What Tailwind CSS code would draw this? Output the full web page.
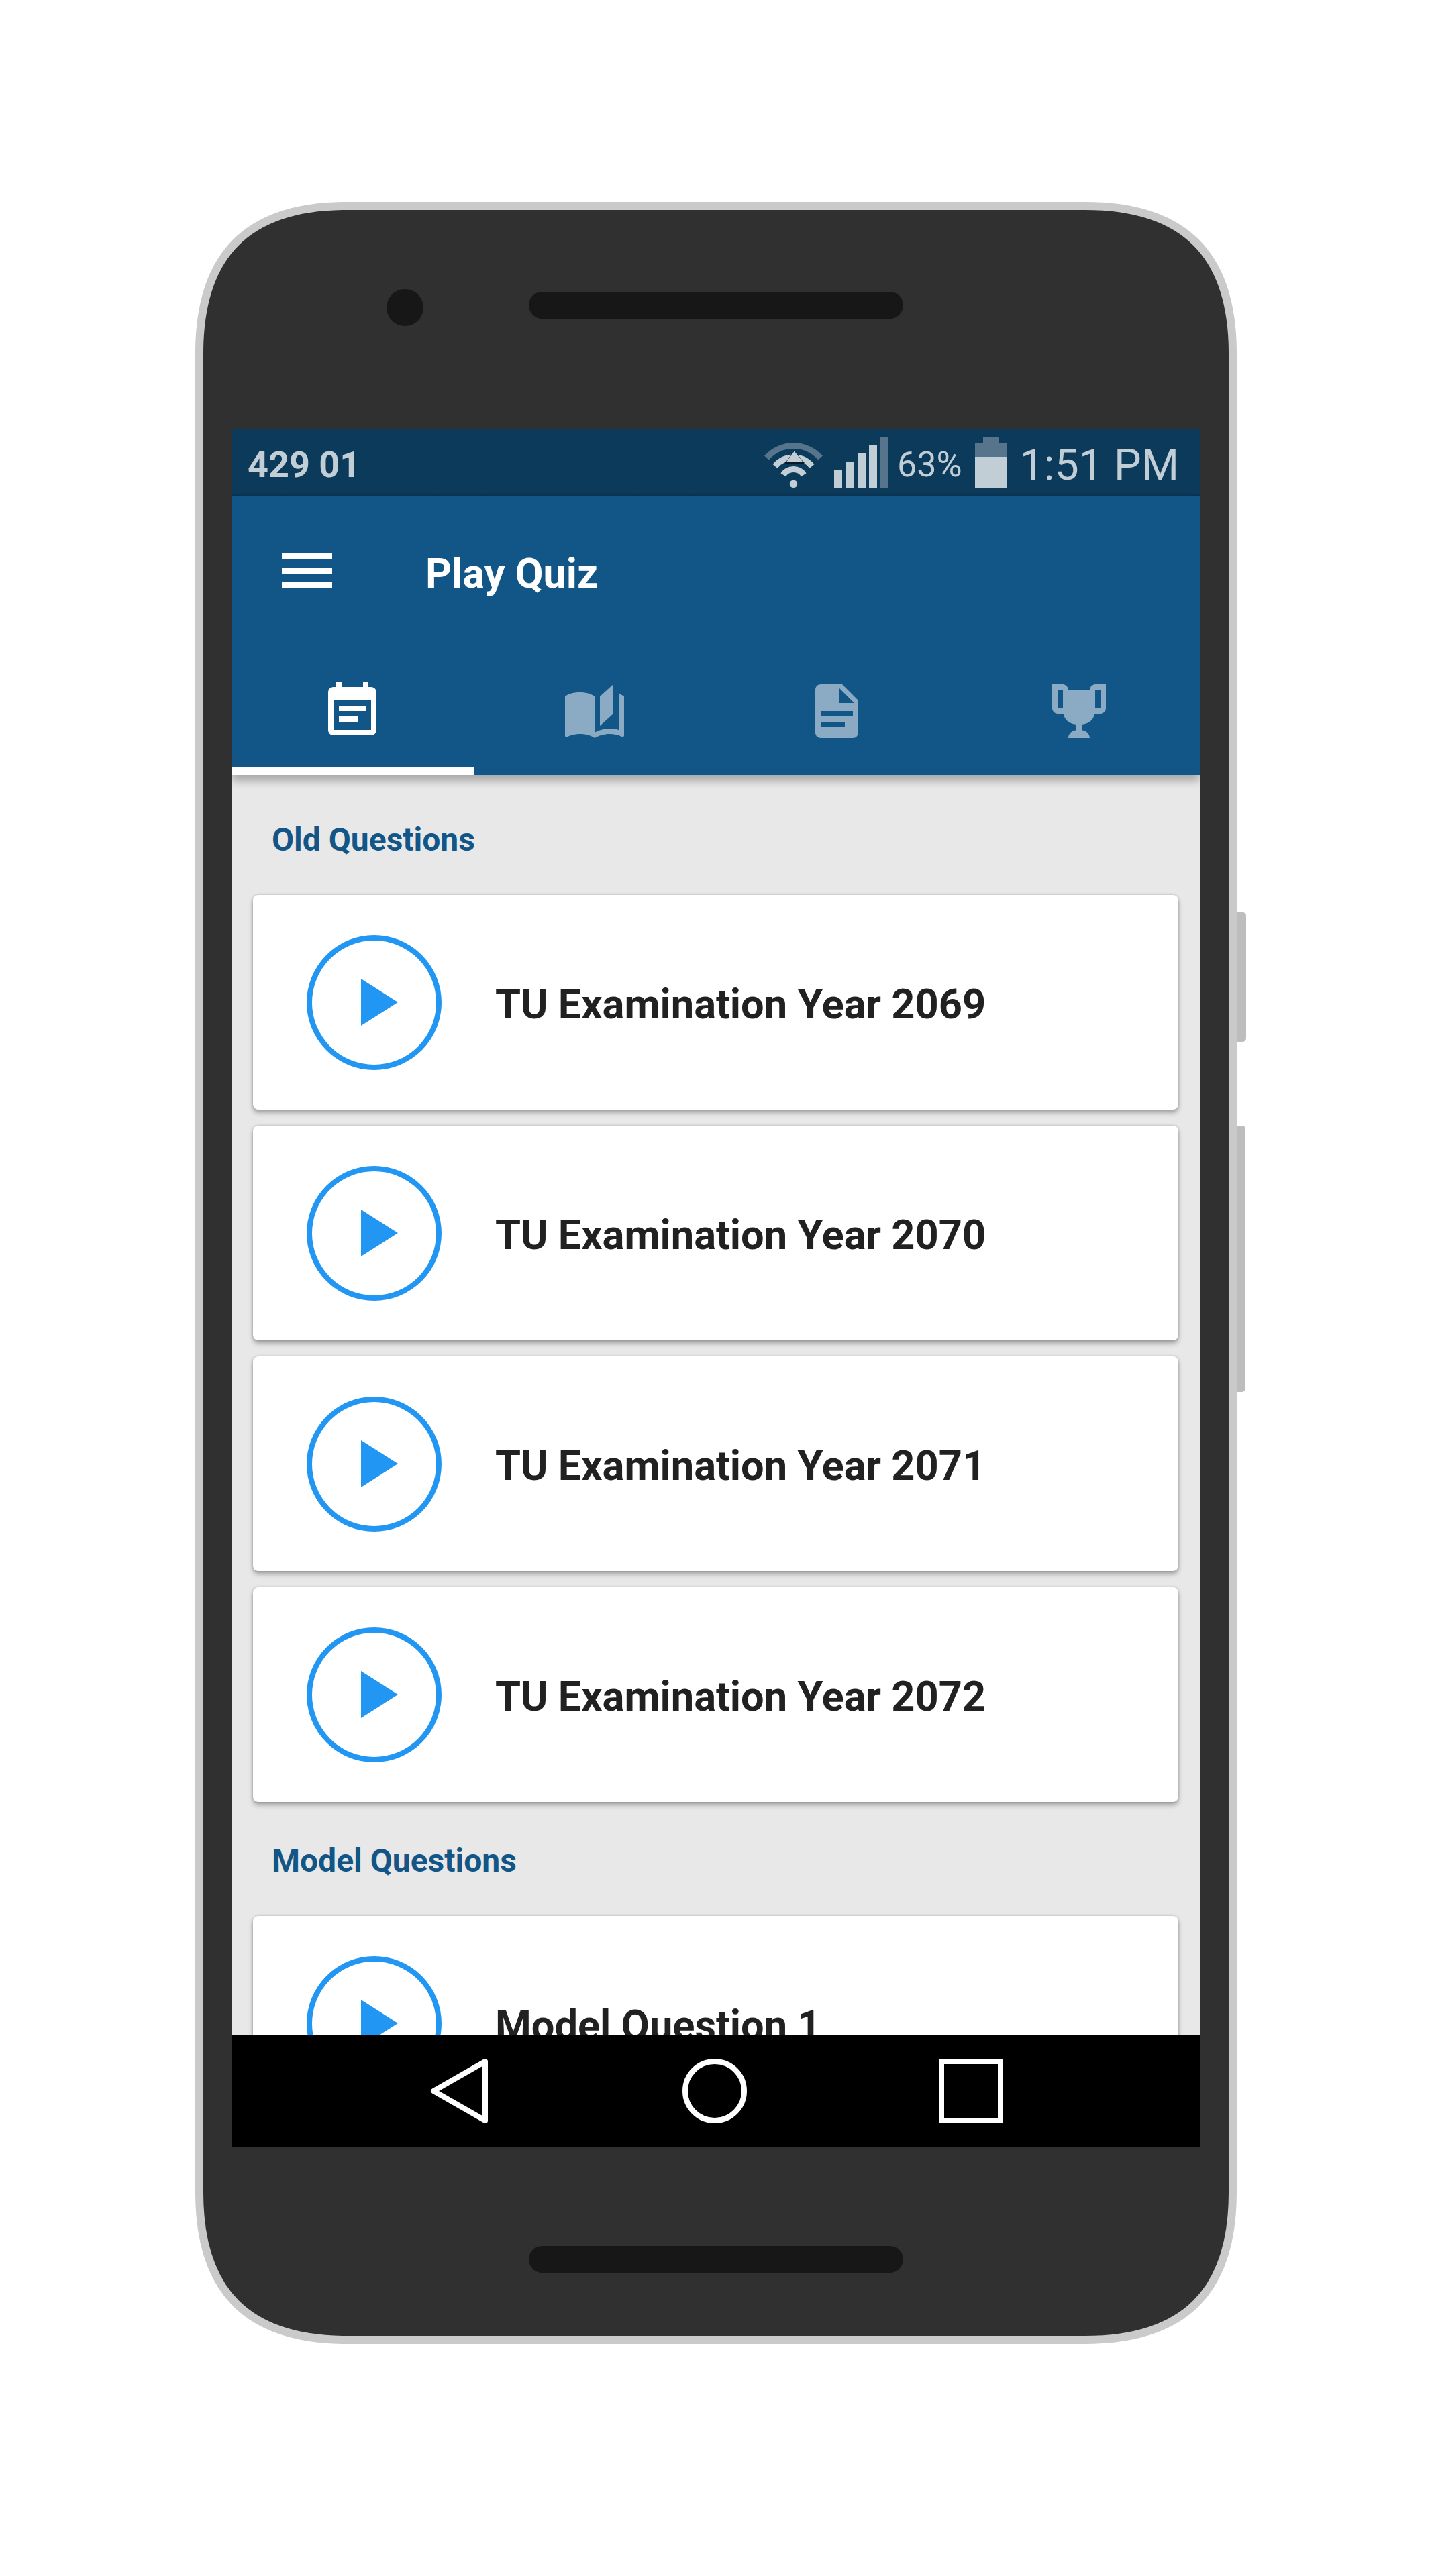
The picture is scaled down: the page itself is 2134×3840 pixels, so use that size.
<!DOCTYPE html>
<html lang="en">
<head>
<meta charset="utf-8">
<title>Play Quiz</title>
<script src="https://cdn.jsdelivr.net/npm/@tailwindcss/browser@4"></script>
</head>
<body class="bg-white font-[Roboto,sans-serif]">
<div class="relative w-[2134px] h-[3840px] overflow-hidden bg-white pt-[301px] pl-[291px]">
  <!-- side buttons -->
  <div class="absolute left-[1843px] top-[1360px] w-[14px] h-[193px] bg-[#bdbdbd] rounded-r-[5px]"></div>
  <div class="absolute left-[1843px] top-[1678px] w-[13px] h-[397px] bg-[#bdbdbd] rounded-r-[5px]"></div>

  <div class="relative w-[1552px] h-[3193px] pl-[54px] pt-[339px]">
    <!-- phone body -->
    <svg class="absolute inset-0" width="1552" height="3193" viewBox="0 0 1552 3193">
      <path d="M226 6H1326C1474 6 1546 78 1546 226V2967C1546 3115 1474 3187 1326 3187H226C78 3187 6 3115 6 2967V226C6 78 78 6 226 6Z" fill="#303030" stroke="#cacaca" stroke-width="12"/>
      <circle cx="312.500" cy="157.500" r="27.500" fill="#171717"/>
      <rect x="497" y="134" width="558" height="40" rx="20" fill="#171717"/>
      <rect x="497" y="3047" width="558" height="40" rx="20" fill="#171717"/>
    </svg>

    <!-- screen -->
    <div class="relative w-[1443px] h-[2561px] flex flex-col overflow-hidden bg-[#e8e8e8]">
      <div class="h-[100px] shrink-0 bg-linear-to-b from-[#0c3a5b] from-95% to-[#0b304c] flex justify-between pl-[24px] pr-[31px] text-[#c2ced6]">
        <div class="text-[54px] leading-[105px] font-bold">429 01</div>
        <div class="flex">
          <svg class="mt-[12px]" width="190" height="76" viewBox="1138 652 190 76" fill="#c2ced6">
            <g fill="none" stroke="#c2ced6" stroke-width="9">
              <path d="M1142.400 682.600A53.500 53.500 0 0 1 1222.600 682.600" stroke="#56758c"/>
              <path d="M1155 695A35.800 35.800 0 0 1 1210 695"/>
              <path d="M1167.200 707.800A18.400 18.400 0 0 1 1197.800 707.800"/>
            </g>
            <circle cx="1182.500" cy="721.300" r="5.800"/>
            <path d="M1183.700 672L1170.500 690H1198Z" stroke="#0b2233" stroke-width="0.800"/>
            <path d="M1170 689h28.500v2H1170z" fill="#06192a"/>
            <path d="M1243 700h12v27h-12zM1260 688h12v39h-12zM1278 676h12v51h-12zM1295 664h12v63h-12z"/>
            <path d="M1312 652h12v75h-12z" fill="#56758c"/>
          </svg>
          <div class="w-[125px] pl-[9px] text-[52px] leading-[106px] whitespace-nowrap">63%</div>
          <svg class="mt-[12px]" width="48" height="75" viewBox="0 0 48 75">
            <path d="M12 0h24v8h12v22H0V8h12z" fill="#56758c"/>
            <path d="M0 29h48v46H0z" fill="#c2ced6"/>
          </svg>
          <div class="w-[256px] text-right text-[64.500px] leading-[106px] whitespace-nowrap">1:51 PM</div>
        </div>
      </div>

      <div class="relative h-[416px] shrink-0 bg-[#125687] shadow-[0_8px_12px_rgba(0,0,0,0.28)] flex flex-col">
        <div class="h-[224px] flex items-center pl-[75px] text-white">
          <svg class="mb-[3px]" width="75" height="51" viewBox="0 0 75 51" fill="currentColor"><path d="M0 0h75v8H0zM0 22h75v8H0zM0 43h75v8H0z"/></svg>
          <div class="ml-[139px] mt-[6px] text-[61px] leading-[72px] font-bold">Play Quiz</div>
        </div>
        <div class="h-[192px] grid grid-cols-4">
          <div class="flex justify-center border-b-[12px] border-white pt-[48px]"><svg class="size-[96px]" viewBox="0 0 24 24" fill="white"><path d="M17 10H7v2h10v-2zm2-7h-1V1h-2v2H8V1H6v2H5c-1.110 0-1.990.9-1.990 2L3 19c0 1.100.89 2 2 2h14c1.100 0 2-.9 2-2V5c0-1.100-.9-2-2-2zm0 16H5V8h14v11zm-5-5H7v2h7v-2z"/></svg></div>
          <div class="flex justify-center pt-[48px]"><svg class="size-[96px] text-[#8aabc3]" viewBox="0 0 24 24" fill="currentColor"><path d="M19,2L14,6.500V17.500L19,13V2M6.500,5C4.550,5 2.450,5.400 1,6.500V21.160C1,21.410 1.250,21.660 1.500,21.660C1.600,21.660 1.650,21.590 1.750,21.590C3.100,20.940 5.050,20.500 6.500,20.500C8.450,20.500 10.550,20.900 12,22C13.350,21.150 15.800,20.500 17.500,20.500C19.150,20.500 20.850,20.810 22.250,21.560C22.350,21.610 22.400,21.590 22.500,21.590C22.750,21.590 23,21.340 23,21.090V6.500C22.400,6.050 21.750,5.750 21,5.500V19C19.900,18.650 18.700,18.500 17.500,18.500C15.800,18.500 13.350,19.150 12,20V6.500C10.550,5.400 8.450,5 6.500,5Z"/></svg></div>
          <div class="flex justify-center pt-[48px]"><svg class="size-[96px] text-[#8aabc3]" viewBox="0 0 24 24" fill="currentColor"><path d="M13,9H18.500L13,3.500V9M6,2H14L20,8V20A2,2 0 0,1 18,22H6C4.890,22 4,21.100 4,20V4C4,2.890 4.890,2 6,2M15,18V16H6V18H15M18,14V12H6V14H18Z"/></svg></div>
          <div class="flex justify-center pt-[48px]"><svg class="size-[96px] text-[#8aabc3]" viewBox="0 0 24 24" fill="currentColor"><path d="M18 2C17.100 2 16 3 16 4H8C8 3 6.900 2 6 2H2V11C2 12 3 13 4 13H6.200C6.600 15 7.900 16.700 11 17V19.080C8 19.540 8 22 8 22H16C16 22 16 19.540 13 19.080V17C16.100 16.700 17.400 15 17.800 13H20C21 13 22 12 22 11V2H18M6 11H4V4H6V11M20 11H18V4H20V11Z"/></svg></div>
        </div>
      </div>

      <div class="h-[1877px] shrink-0 overflow-hidden px-[32px]">
        <h2 class="h-[178px] pt-[68px] pl-[28px] text-[48px] leading-[56px] font-bold text-[#125687]">Old Questions</h2>
        <div class="flex flex-col gap-[24px]">
          <div class="h-[320px] flex items-center pl-[80px] bg-white rounded-[8px] shadow-[0_5px_7px_rgba(0,0,0,0.28),0_0_4px_rgba(0,0,0,0.2)]">
            <div class="size-[201px] rounded-full border-[8px] border-[#2196f3] flex items-center justify-center"><svg class="size-[120px]" viewBox="0 0 24 24" fill="#2196f3"><path d="M8 5v14l11-7z"/></svg></div>
            <div class="ml-[80px] mt-[6px] text-[61.400px] leading-[70px] font-bold text-[#212121]">TU Examination Year 2069</div>
          </div>
          <div class="h-[320px] flex items-center pl-[80px] bg-white rounded-[8px] shadow-[0_5px_7px_rgba(0,0,0,0.28),0_0_4px_rgba(0,0,0,0.2)]">
            <div class="size-[201px] rounded-full border-[8px] border-[#2196f3] flex items-center justify-center"><svg class="size-[120px]" viewBox="0 0 24 24" fill="#2196f3"><path d="M8 5v14l11-7z"/></svg></div>
            <div class="ml-[80px] mt-[6px] text-[61.400px] leading-[70px] font-bold text-[#212121]">TU Examination Year 2070</div>
          </div>
          <div class="h-[320px] flex items-center pl-[80px] bg-white rounded-[8px] shadow-[0_5px_7px_rgba(0,0,0,0.28),0_0_4px_rgba(0,0,0,0.2)]">
            <div class="size-[201px] rounded-full border-[8px] border-[#2196f3] flex items-center justify-center"><svg class="size-[120px]" viewBox="0 0 24 24" fill="#2196f3"><path d="M8 5v14l11-7z"/></svg></div>
            <div class="ml-[80px] mt-[6px] text-[61.400px] leading-[70px] font-bold text-[#212121]">TU Examination Year 2071</div>
          </div>
          <div class="h-[320px] flex items-center pl-[80px] bg-white rounded-[8px] shadow-[0_5px_7px_rgba(0,0,0,0.28),0_0_4px_rgba(0,0,0,0.2)]">
            <div class="size-[201px] rounded-full border-[8px] border-[#2196f3] flex items-center justify-center"><svg class="size-[120px]" viewBox="0 0 24 24" fill="#2196f3"><path d="M8 5v14l11-7z"/></svg></div>
            <div class="ml-[80px] mt-[6px] text-[61.400px] leading-[70px] font-bold text-[#212121]">TU Examination Year 2072</div>
          </div>
        </div>
        <h2 class="h-[170px] pt-[60px] pl-[28px] text-[48px] leading-[56px] font-bold text-[#125687]">Model Questions</h2>
        <div class="h-[320px] flex items-center pl-[80px] bg-white rounded-[8px] shadow-[0_5px_7px_rgba(0,0,0,0.28),0_0_4px_rgba(0,0,0,0.2)]">
          <div class="size-[201px] rounded-full border-[8px] border-[#2196f3] flex items-center justify-center"><svg class="size-[120px]" viewBox="0 0 24 24" fill="#2196f3"><path d="M8 5v14l11-7z"/></svg></div>
          <div class="ml-[80px] mt-[6px] text-[61.400px] leading-[70px] font-bold text-[#212121]">Model Question 1</div>
        </div>
      </div>

      <!-- system navigation -->
      <div class="relative h-[168px] shrink-0 bg-black flex items-center gap-[286px] pl-[290px]">
        <svg class="size-[96px]" viewBox="0 0 96 96" fill="none" stroke="white" stroke-width="8" stroke-linejoin="round"><path d="M88 4V92L11 48Z"/></svg>
        <svg class="size-[96px]" viewBox="0 0 96 96" fill="none" stroke="white" stroke-width="8"><circle cx="48" cy="48" r="44"/></svg>
        <svg class="size-[96px]" viewBox="0 0 96 96" fill="none" stroke="white" stroke-width="8" stroke-linejoin="round"><path d="M4 4H92V92H4Z"/></svg>
      </div>
    </div>
  </div>
</div>
</body>
</html>
